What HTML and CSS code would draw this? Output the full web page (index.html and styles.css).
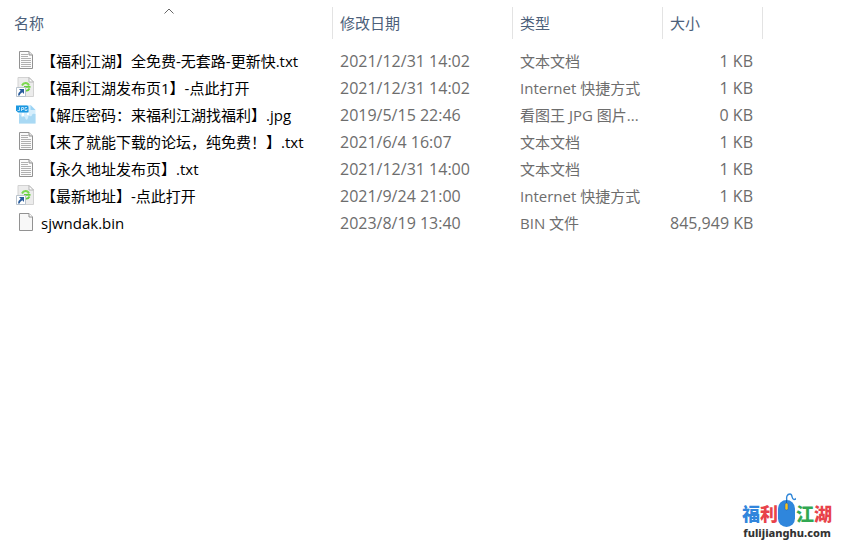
FILE: index.html
```
<!DOCTYPE html>
<html lang="zh-CN">
  <head>
    <meta charset="UTF-8" />
    <meta name="viewport" content="width=device-width, initial-scale=1.0" />
    <title>文件列表</title>
    <link rel="stylesheet" href="styles.css">
  </head>
  <body>
    <!-- file icons -->
    <svg class="icones" aria-hidden="true">
      <symbol id="txt" viewBox="0 0 20 20">
        <path d="M3.500 1.500H13L16.500 5V18.500H3.500Z" fill="#fbfbfb" stroke="#929292"/>
        <path d="M13 1.500V5H16.500" fill="#e4e4e4" stroke="#929292"/>
        <path d="M5 4.500H12M5 6.500H12M5 8.500H15M5 10.500H15M5 12.500H15M5 14.500H15M5 16.500H15" stroke="#b0b0b0"/>
      </symbol>
      <symbol id="bin" viewBox="0 0 20 20">
        <path d="M3.500 1.500H13L16.500 5V18.500H3.500Z" fill="#f8f8f8" stroke="#929292"/>
        <path d="M13 1.500V5H16.500" fill="#fff" stroke="#929292"/>
      </symbol>
      <symbol id="url" viewBox="0 0 20 20">
        <path d="M2 .5H13L17.500 5V19.500H2Z" fill="#ececec" stroke="#d2d2d2"/>
        <path d="M13 .5V5H17.500Z" fill="#fff" stroke="#b4b4b4"/>
        <path d="M6 8.500C7.500 5.500 11.500 5 13 8.500" fill="none" stroke="#7bd84f" stroke-width="2"/>
        <path d="M8 9.800H14.500M13.500 11.500C12.500 13.500 11 14 9.500 13.500" fill="none" stroke="#66cf3d" stroke-width="1.800"/>
        <path d="M.5 10.500H9.500V19.500H.5Z" fill="#fff" stroke="#b9c3cd"/>
        <path d="M3 12H8V17L6.300 15.300Q4 16.500 3.500 18.500H2Q2 15.500 4.700 13.700Z" fill="#285b9c"/>
      </symbol>
      <symbol id="jpg" viewBox="0 0 20 20">
        <path d="M3 1H14.500L19.500 6V19.500H3Z" fill="#d6eefc"/>
        <path d="M14.500 1V6H19.500Z" fill="#9ad3f5"/>
        <path d="M3 10Q5 10 5 12Q6 14 7.500 12.500Q9.500 12 9.500 15Q11 17 12 14Q12 11 14 12Q15.500 13 16 11Q16.500 9 19.500 10V19.500H3Z" fill="#a9d9f4"/>
        <path d="M6 9H8V12H6ZM11 8H13V11H11Z" fill="#fff"/>
        <path d="M0 1.500H11Q12.500 1.500 12.500 3V8.500H2L0 6.500Z" fill="#1b97e0"/>
        <path d="M3.500 3V6.500H1.500M5.500 7V3.500H7.500V5.500H5.500M11 3.500H9V6.500H11V5" fill="none" stroke="#d9f0fd" stroke-width=".8"/>
      </symbol>
    </svg>

    <table class="lista">
      <colgroup>
        <col class="col-nome"><col class="col-data"><col class="col-tipo"><col class="col-tamanho">
      </colgroup>
      <thead>
        <tr>
          <th scope="col" aria-sort="ascending">
            <button type="button">名称</button>
            <svg class="seta" width="10" height="6" viewBox="0 0 10 6" aria-hidden="true"><path d="M.5 5.500L5 1L9.500 5.500" fill="none" stroke="#666"/></svg>
          </th>
          <th scope="col"><button type="button">修改日期</button></th>
          <th scope="col"><button type="button">类型</button></th>
          <th scope="col"><button type="button">大小</button></th>
        </tr>
      </thead>
      <tbody>
        <tr>
          <td class="nome"><div class="arquivo"><svg class="icone"><use href="#txt"/></svg><span>【福利江湖】全免费-无套路-更新快.txt</span></div></td>
          <td class="data">2021/12/31 14:02</td>
          <td>文本文档</td>
          <td class="tamanho">1 KB</td>
        </tr>
        <tr>
          <td class="nome"><div class="arquivo"><svg class="icone"><use href="#url"/></svg><span>【福利江湖发布页1】-点此打开</span></div></td>
          <td class="data">2021/12/31 14:02</td>
          <td>Internet 快捷方式</td>
          <td class="tamanho">1 KB</td>
        </tr>
        <tr>
          <td class="nome"><div class="arquivo"><svg class="icone"><use href="#jpg"/></svg><span>【解压密码：来福利江湖找福利】.jpg</span></div></td>
          <td class="data">2019/5/15 22:46</td>
          <td>看图王 JPG 图片...</td>
          <td class="tamanho">0 KB</td>
        </tr>
        <tr>
          <td class="nome"><div class="arquivo"><svg class="icone"><use href="#txt"/></svg><span>【来了就能下载的论坛，纯免费！】.txt</span></div></td>
          <td class="data">2021/6/4 16:07</td>
          <td>文本文档</td>
          <td class="tamanho">1 KB</td>
        </tr>
        <tr>
          <td class="nome"><div class="arquivo"><svg class="icone"><use href="#txt"/></svg><span>【永久地址发布页】.txt</span></div></td>
          <td class="data">2021/12/31 14:00</td>
          <td>文本文档</td>
          <td class="tamanho">1 KB</td>
        </tr>
        <tr>
          <td class="nome"><div class="arquivo"><svg class="icone"><use href="#url"/></svg><span>【最新地址】-点此打开</span></div></td>
          <td class="data">2021/9/24 21:00</td>
          <td>Internet 快捷方式</td>
          <td class="tamanho">1 KB</td>
        </tr>
        <tr>
          <td class="nome"><div class="arquivo"><svg class="icone"><use href="#bin"/></svg><span>sjwndak.bin</span></div></td>
          <td class="data">2023/8/19 13:40</td>
          <td>BIN 文件</td>
          <td class="tamanho">845,949 KB</td>
        </tr>
      </tbody>
    </table>

    <footer class="logo">
      <div class="logo-nome">
        <span class="azul">福</span><span class="vermelho">利</span>
        <svg class="mouse" width="18" height="34" viewBox="0 0 18 34" aria-hidden="true">
          <path d="M9 8C8 4 9 1 12 1S13 6 16 6.500Q18 6.500 18.500 5" fill="none" stroke="#2f86d8" stroke-width="1.400"/>
          <rect x="0" y="7" width="17" height="27" rx="8.500" fill="#2f86dc"/>
          <path d="M8.500 7V11" stroke="#1c5fa8"/>
          <rect x="7" y="10" width="3" height="7" rx="1.500" fill="#f9c21f" stroke="#1c5fa8" stroke-width=".5"/>
        </svg>
        <span class="verde">江</span><span class="vermelho">湖</span>
      </div>
      <div class="logo-site">fulijianghu.com</div>
    </footer>
  </body>
</html>
```
FILE: styles.css
```
*{
    margin: 0;
    padding: 0;
    box-sizing: border-box;
}

body{
    display: flex;
    flex-direction: column;
    min-height: 100vh;
    padding-top: 7px;
    background-color: white;
    color: #6d6d6d;
    font-family: "Open Sans", "Noto Sans CJK SC", sans-serif;
    font-size: 15px;
    line-height: 27px;
}

.icones{
    position: absolute;
    width: 0;
    height: 0;
}

.lista{
    width: 763px;
    max-width: 100%;
    table-layout: fixed;
    border-collapse: separate;
    border-spacing: 0;
}

.col-nome{
    width: 333px;
}
.col-data{
    width: 180px;
}
.col-tipo{
    width: 150px;
}
.col-tamanho{
    width: 100px;
}

th{
    position: relative;
    height: 32px;
    padding-left: 7px;
    border-right: 1px solid #e3e3e3;
    text-align: left;
}
th:first-child{
    padding-left: 14px;
}

th button{
    display: block;
    border: none;
    background: none;
    color: #4c607a;
    font: inherit;
    font-weight: 400;
    line-height: 30px;
}

/* sort arrow */
.seta{
    position: absolute;
    top: 1px;
    left: 50%;
    margin-left: -2px;
}

tbody::before{
    content: "";
    display: block;
    height: 9px;
}

td{
    height: 27px;
    padding-left: 7px;
    white-space: nowrap;
}

.nome{
    padding-left: 16px;
    color: black;
}

.arquivo{
    display: flex;
    gap: 5px;
}

.icone{
    width: 20px;
    height: 20px;
    margin-top: 2px;
}

.data,
.tamanho{
    font-size: 16px;
}

.tamanho{
    padding-right: 10px;
    text-align: right;
}

.logo{
    display: flex;
    flex-direction: column;
    align-items: center;
    align-self: flex-end;
    margin-top: auto;
    padding: 0 11px 8px 0;
}

.logo-nome{
    display: flex;
    align-items: flex-end;
    font-family: "Noto Sans CJK SC", sans-serif;
    font-size: 18px;
    font-weight: 900;
    line-height: 28px;
}

.logo-site{
    color: #333;
    font-family: "Noto Sans", sans-serif;
    font-size: 11px;
    font-weight: 800;
    line-height: 12px;
}

.azul{
    color: #3286dc;
}
.vermelho{
    color: #e8434a;
}
.verde{
    color: #32a852;
}
```
